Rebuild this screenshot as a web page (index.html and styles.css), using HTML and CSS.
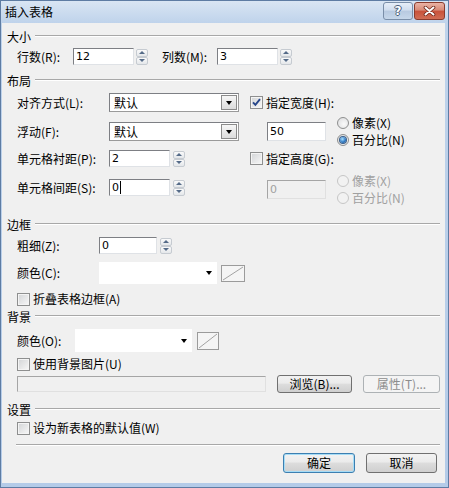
FILE: index.html
```html
<!DOCTYPE html>
<html lang="zh-CN">
<head>
<meta charset="utf-8">
<title>插入表格</title>
<link rel="stylesheet" href="styles.css">
</head>
<body>
<div class="window">
  <div class="titlebar">
    <span class="title">插入表格</span>
    <div class="caption-btns">
      <span class="cap-btn help">?</span>
      <span class="cap-btn close"><svg width="13" height="10" viewBox="0 0 13 10"><path d="M2.5 1.5l8 7M10.5 1.5l-8 7" stroke="#6b2418" stroke-width="3.6" stroke-linecap="round"/><path d="M2.5 1.5l8 7M10.5 1.5l-8 7" stroke="#fff" stroke-width="2" stroke-linecap="round"/></svg></span>
    </div>
  </div>

  <div class="client">
    <div class="ghead"><span>大小</span><i class="gline"></i></div>
    <div class="gbody">
      <div class="row row-size">
        <span class="lbl lbl-rows">行数(R):</span>
        <span class="tbox tb-size">12</span>
        <span class="spin"><i class="up"></i><i class="dn"></i></span>
        <span class="lbl lbl-cols">列数(M):</span>
        <span class="tbox tb-size">3</span>
        <span class="spin"><i class="up"></i><i class="dn"></i></span>
      </div>
    </div>

    <div class="ghead gh-layout"><span>布局</span><i class="gline"></i></div>
    <div class="gbody layout">
      <div class="cell">
        <span class="lbl lbl-layout">对齐方式(L):</span>
        <span class="select"><span class="sel-val">默认</span><span class="dd-btn"></span></span>
      </div>
      <div class="cell cell-right">
        <span class="cb"><svg width="11" height="11" viewBox="0 0 11 11"><path d="M2 5.3l2.4 2.6L9 2.2" fill="none" stroke="#27468a" stroke-width="1.9"/></svg></span>
        <span class="cb-text">指定宽度(H):</span>
      </div>
      <div class="cell">
        <span class="lbl lbl-layout">浮动(F):</span>
        <span class="select"><span class="sel-val">默认</span><span class="dd-btn"></span></span>
      </div>
      <div class="cell cell-right sub">
        <span class="tbox tb-dim">50</span>
        <div class="radios">
          <div class="radio-row"><span class="radio"></span><span class="r-text">像素(X)</span></div>
          <div class="radio-row"><span class="radio on"></span><span class="r-text">百分比(N)</span></div>
        </div>
      </div>
      <div class="cell">
        <span class="lbl lbl-layout">单元格衬距(P):</span>
        <span class="tbox tb-pad">2</span>
        <span class="spin"><i class="up"></i><i class="dn"></i></span>
      </div>
      <div class="cell cell-right">
        <span class="cb"></span>
        <span class="cb-text">指定高度(G):</span>
      </div>
      <div class="cell">
        <span class="lbl lbl-layout">单元格间距(S):</span>
        <span class="tbox tb-pad">0<b class="caret"></b></span>
        <span class="spin"><i class="up"></i><i class="dn"></i></span>
      </div>
      <div class="cell cell-right sub sub-dis">
        <span class="tbox tb-dim disabled">0</span>
        <div class="radios disabled">
          <div class="radio-row"><span class="radio"></span><span class="r-text">像素(X)</span></div>
          <div class="radio-row"><span class="radio"></span><span class="r-text">百分比(N)</span></div>
        </div>
      </div>
    </div>

    <div class="ghead gh-border"><span>边框</span><i class="gline"></i></div>
    <div class="gbody">
      <div class="row row-thick">
        <span class="lbl lbl-border">粗细(Z):</span>
        <span class="tbox tb-thick">0</span>
        <span class="spin"><i class="up"></i><i class="dn"></i></span>
      </div>
      <div class="row row-bcolor">
        <span class="lbl lbl-border">颜色(C):</span>
        <span class="combo combo-b"><i class="tri"></i></span>
        <svg class="swatch sw-b" width="24" height="17" viewBox="0 0 24 17"><rect x="0.5" y="0.5" width="23" height="16" fill="#f5f5f5" stroke="#9b9b9b"/><path d="M2 15L22 2" stroke="#a3a3a3"/></svg>
      </div>
      <div class="row row-cb row-collapse">
        <span class="cb"></span>
        <span class="cb-text">折叠表格边框(A)</span>
      </div>
    </div>

    <div class="ghead gh-bg"><span>背景</span><i class="gline"></i></div>
    <div class="gbody">
      <div class="row row-bgcolor">
        <span class="lbl lbl-bg">颜色(O):</span>
        <span class="combo combo-bg"><i class="tri"></i></span>
        <svg class="swatch sw-bg" width="22" height="18" viewBox="0 0 22 18"><rect x="0.5" y="0.5" width="21" height="17" fill="#f5f5f5" stroke="#9b9b9b"/><path d="M2 16L20 2" stroke="#a3a3a3"/></svg>
      </div>
      <div class="row row-cb row-bgimg">
        <span class="cb"></span>
        <span class="cb-text">使用背景图片(U)</span>
      </div>
      <div class="row row-path">
        <span class="tbox tb-path disabled"></span>
        <span class="btn btn-browse">浏览(B)...</span>
        <span class="btn btn-prop disabled">属性(T)...</span>
      </div>
    </div>

    <div class="ghead gh-set"><span>设置</span><i class="gline"></i></div>
    <div class="gbody">
      <div class="row row-cb row-default">
        <span class="cb"></span>
        <span class="cb-text">设为新表格的默认值(W)</span>
      </div>
    </div>

    <div class="separator"></div>

    <div class="row row-actions">
      <span class="btn btn-action default">确定</span>
      <span class="btn btn-action btn-cancel">取消</span>
    </div>
  </div>
</div>
</body>
</html>
```

FILE: styles.css
```css
* { box-sizing: border-box; }
html, body { margin: 0; padding: 0; }
body {
  width: 449px;
  height: 488px;
  overflow: hidden;
  font-family: "Noto Sans CJK SC", "Noto Sans", sans-serif;
  font-size: 12px;
  color: #000;
  background: #fff;
}

.window {
  width: 449px;
  height: 488px;
  border: 1px solid #5e7ca3;
  background: linear-gradient(#d9e5f3, #bfd3eb 22px, #b4cbe8);
  display: flex;
  flex-direction: column;
}

/* title bar */
.titlebar {
  height: 22px;
  display: flex;
  align-items: center;
  padding-left: 4px;
}
.title { line-height: 14px; }
.caption-btns {
  margin-left: auto;
  margin-right: 3px;
  align-self: flex-start;
  margin-top: 1px;
  display: flex;
  gap: 1px;
}
.cap-btn {
  height: 18px;
  display: flex;
  align-items: center;
  justify-content: center;
  border-radius: 3px;
}
.cap-btn.help {
  width: 30px;
  border: 1px solid #7a8ea8;
  background: linear-gradient(#e6eef8, #d0ddee 45%, #b7c9e0 50%, #c6d7ea);
  color: #fff;
  font-family: "DejaVu Sans", sans-serif;
  font-weight: bold;
  font-size: 12px;
  text-shadow: 1px 0 0 #4a5d78, -1px 0 0 #4a5d78, 0 1px 0 #4a5d78, 0 -1px 0 #4a5d78;
}
.cap-btn.close {
  width: 31px;
  border: 1px solid #8a3b2d;
  background: linear-gradient(#eab3a5, #d88a76 45%, #c8513a 50%, #d06d55);
}

/* client area */
.client {
  flex: 1;
  margin: 0 3px 4px 1px;
  background: #f0f0f0;
  padding: 7px 5px 0 5px;
}

.ghead {
  display: flex;
  align-items: center;
  height: 14px;
  line-height: 14px;
}
.gline {
  flex: 1;
  margin-left: 4px;
  margin-top: -2px;
  border-top: 1px solid #a8a8a8;
  border-bottom: 1px solid #fff;
}
.gh-layout { margin-top: 9px; }
.gh-border { margin-top: 10px; }
.gh-bg { margin-top: 4px; }
.gh-set { margin-top: 10px; }

.gbody { padding-left: 10px; }

.row {
  display: flex;
  align-items: center;
}
.lbl { line-height: 14px; flex: none; }
.cb-text, .r-text { line-height: 14px; }

/* text boxes */
.tbox {
  height: 17px;
  display: flex;
  align-items: center;
  padding-left: 2px;
  background: #fff;
  border: 1px solid;
  border-color: #7d7f84 #dfe2e6 #dfe2e6 #7d7f84;
  font-family: "DejaVu Sans", sans-serif;
  font-size: 11px;
  flex: none;
}
.tbox.disabled {
  background: #f0f0f0;
  color: #a0a0a0;
  border-color: #a5a5a5 #e0e0e0 #e0e0e0 #a5a5a5;
}
.caret {
  display: inline-block;
  width: 1px;
  height: 13px;
  background: #000;
  margin-left: 1px;
}

/* spinner */
.spin {
  width: 12px;
  height: 16px;
  display: flex;
  flex-direction: column;
  margin-left: 2px;
  flex: none;
}
.spin i {
  flex: 1;
  display: flex;
  align-items: center;
  justify-content: center;
  border: 1px solid #c6cbd1;
  border-radius: 2px;
  background: linear-gradient(#fafafa, #e4e7ea);
}
.spin i::after {
  content: "";
  width: 0;
  height: 0;
  border-left: 3px solid transparent;
  border-right: 3px solid transparent;
}
.spin .up::after { border-bottom: 3px solid #556b88; }
.spin .dn::after { border-top: 3px solid #556b88; }

/* size row */
.row-size { margin-top: 4px; height: 17px; }
.lbl-rows { width: 56px; }
.lbl-cols { width: 55px; margin-left: 14px; }
.tb-size { width: 61px; }

/* layout grid */
.layout {
  margin-top: 4px;
  display: grid;
  grid-template-columns: 233px 1fr;
  grid-template-rows: 21px 37px 17px 41px;
}
.cell {
  display: flex;
  align-items: center;
}
.lbl-layout { width: 92px; }
.select {
  width: 130px;
  height: 19px;
  display: flex;
  align-items: center;
  background: #fff;
  border: 1px solid;
  border-color: #7d7f84 #9a9a9a #9a9a9a #7d7f84;
  padding: 1px;
}
.sel-val { flex: 1; padding-left: 3px; line-height: 14px; }
.dd-btn {
  width: 16px;
  height: 15px;
  border: 1px solid #8b8b8b;
  background: linear-gradient(#f6f6f6, #dcdcdc);
  display: flex;
  align-items: center;
  justify-content: center;
}
.dd-btn::after {
  content: "";
  border-left: 3.5px solid transparent;
  border-right: 3.5px solid transparent;
  border-top: 4px solid #000;
  margin-top: 1px;
}
.tb-pad { width: 61px; }
.cell .spin { margin-left: 3px; }

.cb {
  width: 13px;
  height: 13px;
  flex: none;
  border: 1px solid #8e8f8f;
  background: linear-gradient(135deg, #d2d4d6, #f8f8f8);
  box-shadow: inset 0 0 0 1px #f4f4f4;
  display: flex;
  align-items: center;
  justify-content: center;
}
.cb-text { margin-left: 3px; }

.cell-right.sub { padding-left: 17px; }
.sub-dis { margin-top: 3px; }
.tb-dim { width: 59px; height: 19px; }
.radios {
  margin-left: 11px;
  display: flex;
  flex-direction: column;
}
.radio-row {
  height: 17px;
  display: flex;
  align-items: center;
}
.radio {
  width: 12px;
  height: 12px;
  border-radius: 50%;
  border: 1px solid #8e8f8f;
  background: radial-gradient(circle at 60% 60%, #fafafa, #d9dadc);
  margin-right: 3px;
  display: flex;
  align-items: center;
  justify-content: center;
  flex: none;
}
.radio.on::after {
  content: "";
  width: 6px;
  height: 6px;
  border-radius: 50%;
  background: radial-gradient(circle at 40% 35%, #a9e1ff, #2a74c0 60%, #17406e);
  box-shadow: 0 0 0 1px #3b5f8a;
}
.radios.disabled .radio { border-color: #c6c6c6; background: #f2f2f2; }
.radios.disabled .r-text { color: #a0a0a0; }

/* border group */
.row-thick { margin-top: 5px; height: 17px; }
.lbl-border { width: 82px; }
.tb-thick { width: 58px; }
.row-thick .spin { margin-left: 3px; }
.row-bcolor { margin-top: 8px; height: 22px; }
.combo {
  height: 22px;
  background: #fff;
  display: flex;
  align-items: center;
  justify-content: flex-end;
  padding-right: 5px;
  flex: none;
}
.combo .tri {
  border-left: 3.5px solid transparent;
  border-right: 3.5px solid transparent;
  border-top: 4px solid #000;
}
.combo-b { width: 118px; }
.swatch { flex: none; display: block; }
.sw-b { margin-left: 4px; }
.row-cb { height: 14px; }
.row-collapse { margin-top: 8px; }

/* background group */
.row-bgcolor { margin-top: 5px; height: 23px; }
.lbl-bg { width: 58px; }
.combo-bg { width: 117px; height: 23px; }
.sw-bg { margin-left: 5px; }
.row-bgimg { margin-top: 5px; }
.row-path { margin-top: 4px; height: 18px; }
.tb-path { width: 249px; height: 16px; }

.btn {
  height: 18px;
  display: flex;
  align-items: center;
  justify-content: center;
  border: 1px solid #707070;
  border-radius: 3px;
  background: linear-gradient(#f2f2f2, #ebebeb 45%, #dddddd 50%, #cfcfcf);
  line-height: 14px;
  flex: none;
}
.btn-browse { width: 75px; margin-left: 11px; }
.btn-prop { width: 77px; margin-left: 11px; }
.btn.disabled {
  border-color: #adb2b5;
  background: #f4f4f4;
  color: #8d8d8d;
}

/* settings */
.row-default { margin-top: 4px; margin-left: 0; }

.separator {
  margin: 9px 0 0 9px;
  border-top: 1px solid #a8a8a8;
  border-bottom: 1px solid #fff;
}

.row-actions {
  margin-top: 7px;
  justify-content: flex-end;
  padding-right: 3px;
  gap: 11px;
}
.btn-action { width: 72px; height: 20px; }
.btn-cancel { width: 71px; }
.btn.default {
  border-color: #3c7fb1;
  box-shadow: inset 0 0 0 1px #a6dcf6;
}
```
